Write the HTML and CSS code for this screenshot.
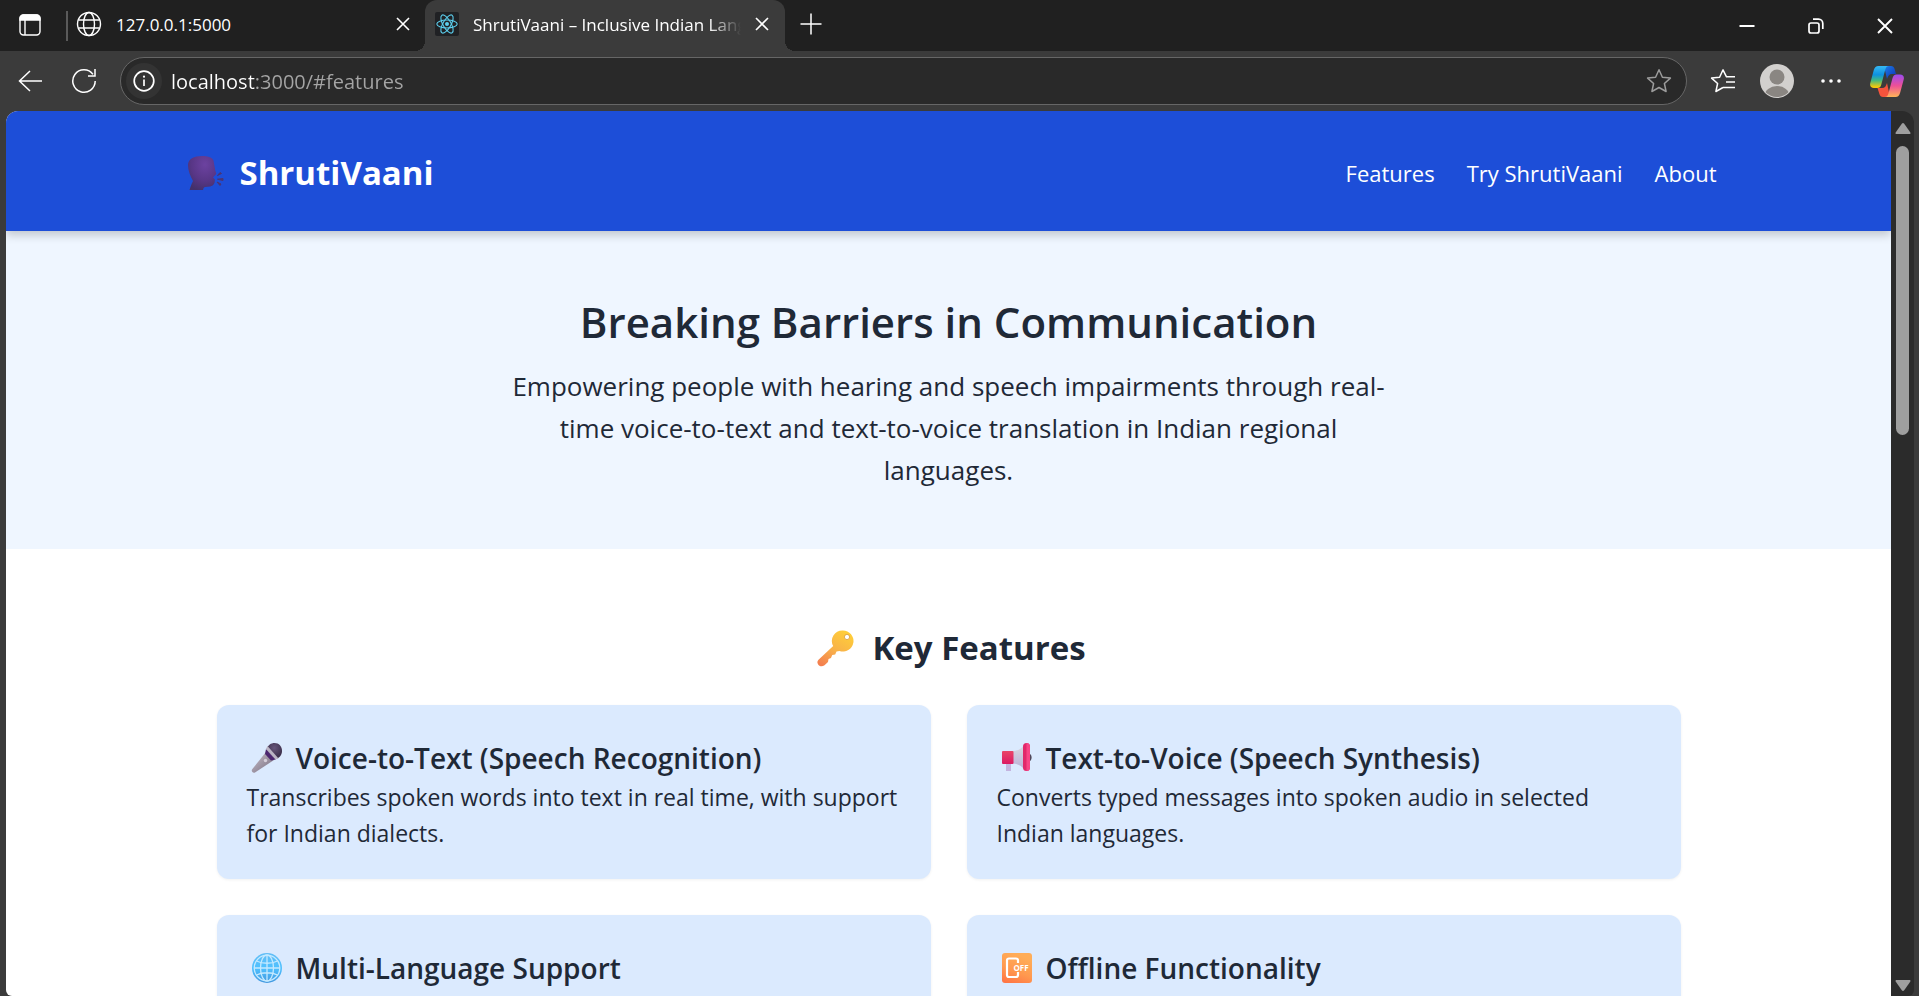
FILE: index.html
```html
<!DOCTYPE html>
<html lang="en">
<head>
<meta charset="utf-8">
<title>ShrutiVaani – Inclusive Indian Languages</title>
<link rel="stylesheet" href="styles.css">
</head>
<body>
<div class="tabstrip">
  <button class="icon-btn workspace" aria-label="Tab actions">
    <svg width="24" height="24" viewBox="0 0 24 24" fill="none" stroke="#fff" stroke-width="1.4"><rect x="2" y="2" width="20" height="20" rx="3.5"/><path d="M2 7V5.500a3.500 3.500 0 0 1 3.500-3.500h13a3.500 3.500 0 0 1 3.500 3.500V7z" fill="#fff"/><path d="M7 7v15"/></svg>
  </button>
  <span class="divider"></span>
  <div class="tab">
    <svg width="26" height="26" viewBox="0 0 26 26" fill="none" stroke="#fff" stroke-width="1.4"><circle cx="13" cy="13" r="11.500"/><ellipse cx="13" cy="13" rx="5.500" ry="11.500"/><path d="M2.500 9h21M2.500 17h21"/></svg>
    <span class="tab-title">127.0.0.1:5000</span>
    <button class="icon-btn" aria-label="Close tab"><svg width="14" height="14" viewBox="0 0 14 14" stroke="#fff" stroke-width="1.6"><path d="M1 1l12 12M13 1L1 13"/></svg></button>
  </div>
  <div class="tab active">
    <svg width="24" height="24" viewBox="0 0 24 24" fill="none" stroke="#5ccfee" stroke-width="1.100"><rect width="24" height="24" rx="2" fill="#202124" stroke="none"/><ellipse cx="12" cy="12" rx="10.200" ry="4"/><ellipse cx="12" cy="12" rx="10.200" ry="4" transform="rotate(60 12 12)"/><ellipse cx="12" cy="12" rx="10.200" ry="4" transform="rotate(120 12 12)"/><circle cx="12" cy="12" r="2" fill="#5ccfee" stroke="none"/></svg>
    <span class="tab-title fade">ShrutiVaani – Inclusive Indian Languages</span>
    <button class="icon-btn" aria-label="Close tab"><svg width="14" height="14" viewBox="0 0 14 14" stroke="#fff" stroke-width="1.6"><path d="M1 1l12 12M13 1L1 13"/></svg></button>
  </div>
  <button class="icon-btn new-tab" aria-label="New tab"><svg width="22" height="22" viewBox="0 0 22 22" stroke="#fff" stroke-width="1.500"><path d="M11 .5v21M.5 11h21"/></svg></button>
  <div class="window-buttons">
    <button class="icon-btn" aria-label="Minimize"><svg width="16" height="16" viewBox="0 0 16 16" stroke="#fff" stroke-width="2"><path d="M.5 8h15"/></svg></button>
    <button class="icon-btn" aria-label="Restore"><svg width="16" height="16" viewBox="0 0 16 16" fill="none" stroke="#fff" stroke-width="1.700"><rect x="1" y="5" width="10" height="10" rx="2"/><path d="M5 1.200h5.500a4.300 4.300 0 0 1 4.300 4.300V11"/></svg></button>
    <button class="icon-btn" aria-label="Close"><svg width="16" height="16" viewBox="0 0 16 16" stroke="#fff" stroke-width="1.900"><path d="M1 1l14 14M15 1L1 15"/></svg></button>
  </div>
</div>

<div class="toolbar">
  <button class="icon-btn" aria-label="Back"><svg width="24" height="22" viewBox="0 0 24 22" fill="none" stroke="#fff" stroke-width="1.500"><path d="M24 11H1M12 1L1.500 11 12 21"/></svg></button>
  <button class="icon-btn" aria-label="Refresh"><svg width="26" height="26" viewBox="0 0 26 26" fill="none" stroke="#fff" stroke-width="1.500"><path d="M24.200 13A11.200 11.200 0 1 1 22 6.400M24 1v7h-7"/></svg></button>
  <div class="address">
    <button class="icon-btn info" aria-label="Site information"><svg width="22" height="22" viewBox="0 0 22 22" fill="none" stroke="#fff" stroke-width="1.700"><circle cx="11" cy="11" r="9.800"/><path d="M11 9.500V16"/><circle cx="11" cy="6.700" r="1.100" fill="#fff" stroke="none"/></svg></button>
    <input class="url" type="text" aria-label="Address" value="localhost:3000/#features">
    <button class="icon-btn" aria-label="Add to favorites"><svg width="26" height="26" viewBox="0 0 26 26" fill="none" stroke="#9b9b9b" stroke-width="1.500" stroke-linejoin="round"><path d="M13 1.800l3.400 7.400 8 .9-6 5.400 1.700 8L13 19.500l-7.100 4 1.700-8-6-5.400 8-.9z"/></svg></button>
  </div>
  <div class="tools">
    <button class="icon-btn" aria-label="Favorites"><svg width="26" height="26" viewBox="0 0 26 26" fill="none" stroke="#fff" stroke-width="1.500" stroke-linejoin="round"><path d="M16.500 8.900L13 1.800l-3.400 7.400-8 .9 6 5.400-1.700 8L13 19.500M16 8.800h9M16 14h9M13 19.500h12"/></svg></button>
    <button class="icon-btn" aria-label="Profile"><svg width="34" height="34" viewBox="0 0 34 34"><clipPath id="av"><circle cx="17" cy="17" r="16"/></clipPath><circle cx="17" cy="17" r="17" fill="#d2d0ce"/><g clip-path="url(#av)" fill="#8a8682"><circle cx="17" cy="13" r="7.500"/><ellipse cx="17" cy="32" rx="12.500" ry="10"/></g></svg></button>
    <button class="icon-btn" aria-label="Settings and more"><svg width="20" height="4" viewBox="0 0 20 4" fill="#fff"><circle cx="2" cy="2" r="1.800"/><circle cx="10" cy="2" r="1.800"/><circle cx="18" cy="2" r="1.800"/></svg></button>
    <button class="icon-btn copilot" aria-label="Copilot"><svg width="34" height="31" viewBox="0 0 34 31">
      <defs><linearGradient id="c1" x1="0" y1="0" x2="0" y2="1"><stop offset="0" stop-color="#36b9f4"/><stop offset=".4" stop-color="#0d91e1"/><stop offset=".65" stop-color="#42b982"/><stop offset=".95" stop-color="#f5c90a"/></linearGradient><linearGradient id="c2" x1="0" y1="0" x2="0" y2="1"><stop offset="0" stop-color="#9b4bf0"/><stop offset=".5" stop-color="#ee5097"/><stop offset="1" stop-color="#ffb557"/></linearGradient><linearGradient id="c3" x1="0" y1="0" x2="1" y2="1"><stop offset="0" stop-color="#1d7fe8"/><stop offset="1" stop-color="#0b2fb5"/></linearGradient></defs>
      <path d="M14 0h7c2 0 3 1 3.600 3L26 8h-4c-3 0-4 2-5 5z" fill="url(#c3)"/>
      <path d="M20 31h-7c-2 0-3-1-3.600-3L7.500 22H12c3 0 4-2 5-5z" fill="#f5533c"/>
      <path d="M8.500 0H19c-2 0-3 1-3.700 3.500l-4 15C10.500 21.300 9.500 22 7.500 22H4c-3 0-4.500-2-3.700-5l3.500-13C4.700 1.500 6 0 8.500 0z" fill="url(#c1)"/>
      <path d="M25.500 31H14.500c2.500 0 3.200-1 3.900-3.500l4-15C23.200 9.700 24.200 8.500 26.500 8.500H30c3 0 4.500 2 3.700 5l-3.500 13c-.9 3-2.200 4.500-4.700 4.500z" fill="url(#c2)"/></svg></button>
  </div>
</div>

<div class="window">
  <div class="page">
    <header class="site-header">
      <div class="container">
        <h1 class="brand">
          <svg width="36" height="34" viewBox="0 0 36 34"><defs><radialGradient id="hd" cx=".6" cy=".25" r=".8"><stop offset="0" stop-color="#6c42a0"/><stop offset=".6" stop-color="#583686"/><stop offset="1" stop-color="#43306a"/></radialGradient></defs><path d="M14 0C19 0 24 1 25.500 4.500L27 13c.2 2 1.300 3.500 1.200 5L25 21.500l1.800 1.700c.4 4.500-1.500 6.500-4.500 7.200l-5 .6c-1.500.3-2 1.300-2.200 3H1.500c1-3 1.700-5.500 3.500-9C2 20 0 14 0 9 0 3 6 0 14 0z" fill="url(#hd)"/><path d="M29.500 19.500l2.500-3 1.500 1zM29.500 23.200l5.500-.7v2zM29 26l3 3.500 1-1.500z" fill="#4a3474" stroke="#4a3474"/></svg>
          <span>ShrutiVaani</span>
        </h1>
        <nav class="nav"><a href="#features">Features</a><a href="#try">Try ShrutiVaani</a><a href="#about">About</a></nav>
      </div>
    </header>
    <section class="hero">
      <h2>Breaking Barriers in Communication</h2>
      <p>Empowering people with hearing and speech impairments through real-time voice-to-text and text-to-voice translation in Indian regional languages.</p>
    </section>
    <section class="features" id="features">
      <h2>
        <svg width="37" height="37" viewBox="0 0 37 37"><defs><linearGradient id="ky" x1=".8" y1="0" x2=".2" y2="1"><stop offset="0" stop-color="#ffcf38"/><stop offset=".55" stop-color="#f8b14a"/><stop offset="1" stop-color="#f4804f"/></linearGradient></defs><path d="M26 .5a10.500 10.500 0 1 1-3.500 20.400l-3 .6-1.300 3-3 .5-1.200 3-2.500 1-.5 3-3.500 3.200c-2 1.600-4.500 1.500-6-.2s-1.500-3.700 0-5.200L16.200 16A10.500 10.500 0 0 1 26 .5z" fill="url(#ky)"/><circle cx="30" cy="7" r="2.600" fill="#fff" stroke="#d99a35" stroke-width=".8"/></svg>
        <span>Key Features</span>
      </h2>
      <div class="grid">
        <article class="card">
          <h3><svg width="32" height="32" viewBox="0 0 32 32"><defs><linearGradient id="mc" x1="0" y1="0" x2="1" y2="1"><stop offset=".25" stop-color="#b5acb8"/><stop offset="1" stop-color="#746a7d"/></linearGradient><radialGradient id="mh" cx=".5" cy=".3" r=".7"><stop offset="0" stop-color="#66557a"/><stop offset="1" stop-color="#342842"/></radialGradient></defs><path d="M15 10l8 8L4 30.500c-2 1-4-1-3-3z" fill="url(#mc)"/><path d="M15.500 7.500C17 3 20 1 23.500 1 28 1 31 4.500 31 9c0 4-2.500 7-7 8.500z" fill="url(#mh)"/><path d="M15 7l9.500 10.500-4.500 1-6-6.500z" fill="#4c2670"/><path d="M16.500 4l11 12.500-3 1L15 7z" fill="#bbb4c4"/><circle cx="14.500" cy="18.500" r="1.700" fill="#d5ced9"/></svg><span>Voice-to-Text (Speech Recognition)</span></h3>
          <p>Transcribes spoken words into text in real time, with support for Indian dialects.</p>
        </article>
        <article class="card">
          <h3><svg width="32" height="32" viewBox="0 0 32 32"><defs><linearGradient id="mg" x1="0" y1="0" x2="0" y2="1"><stop offset="0" stop-color="#d9d9df"/><stop offset="1" stop-color="#bbb0d8"/></linearGradient><linearGradient id="mr" x1="0" y1="0" x2="0" y2="1"><stop offset="0" stop-color="#e94567"/><stop offset="1" stop-color="#db1963"/></linearGradient></defs><path d="M5 20h5v9H5z" fill="#c4b4df"/><path d="M11 9c5 0 9-1.500 12-6v24c-3-4-7-5.500-12-5.500z" fill="url(#mg)"/><rect x="1" y="9" width="11.500" height="13" rx="1" fill="url(#mr)"/><path d="M28 11.500c3.500 1 3.500 7 0 8z" fill="#51485a"/><rect x="22" y="1" width="7" height="28" rx="3.500" fill="#e1286a"/><path d="M25.500 1C28 1 29 3 29 5v20c0 2-1 4-3.500 4z" fill="#f94485"/></svg><span>Text-to-Voice (Speech Synthesis)</span></h3>
          <p>Converts typed messages into spoken audio in selected Indian languages.</p>
        </article>
        <article class="card">
          <h3><svg width="32" height="32" viewBox="0 0 32 32" fill="none" stroke="#c4e9ff" stroke-width="1.300"><defs><linearGradient id="gl" x1="0" y1="0" x2="0" y2="1"><stop offset="0" stop-color="#62bdf5"/><stop offset=".5" stop-color="#4fc1ff"/><stop offset="1" stop-color="#4398df"/></linearGradient></defs><circle cx="16" cy="16" r="15" fill="url(#gl)" stroke="none"/><circle cx="16" cy="16" r="12.800"/><ellipse cx="16" cy="16" rx="6.500" ry="13"/><path d="M16 3v26M3 16h26M5.500 9c6 3 15 3 21 0M5.500 23c6-3 15-3 21 0"/></svg><span>Multi-Language Support</span></h3>
        </article>
        <article class="card">
          <h3><svg width="32" height="32" viewBox="0 0 32 32"><defs><linearGradient id="of" x1="0" y1="1" x2=".4" y2="0"><stop offset="0" stop-color="#ff7043"/><stop offset=".5" stop-color="#ff994f"/><stop offset="1" stop-color="#ffad58"/></linearGradient></defs><rect x="1" y="1" width="30" height="30" rx="3" fill="url(#of)"/><path d="M17 11V8.500a2 2 0 0 0-2-2H8a2 2 0 0 0-2 2V23a2 2 0 0 0 2 2h7a2 2 0 0 0 2-2v-3" fill="none" stroke="#fff" stroke-width="2.200"/><text x="12.500" y="18.500" class="off">OFF</text></svg><span>Offline Functionality</span></h3>
        </article>
      </div>
    </section>
  </div>
  <div class="scrollbar">
    <svg width="16" height="12" viewBox="0 0 16 12" fill="#9f9f9f"><path d="M6.800.8a1.500 1.500 0 0 1 2.400 0l6 8.500c.6 1 .2 1.700-.9 1.700H1.700C.6 11 .2 10.300.8 9.300z"/></svg>
    <div class="track"><div class="thumb"></div></div>
    <svg width="16" height="12" viewBox="0 0 16 12" fill="#9f9f9f"><path d="M6.800 11.200a1.500 1.500 0 0 0 2.400 0l6-8.500c.6-1 .2-1.700-.9-1.700H1.700C.6 1 .2 1.700.8 2.700z"/></svg>
  </div>
</div>
</body>
</html>
```
FILE: styles.css
```css
* { box-sizing: border-box; }

body {
  margin: 0;
  height: 100vh;
  display: flex;
  flex-direction: column;
  overflow: hidden;
  background: #3b3b3b;
  color: #1f2937;
  font-family: "Open Sans", "Noto Sans", sans-serif;
}

h1, h2, h3, p { margin: 0; }
svg { display: block; flex: none; }

.icon-btn {
  display: grid;
  place-items: center;
  flex: none;
  padding: 0;
  border: 0;
  background: none;
}

/* Tab strip */
.tabstrip {
  display: flex;
  align-items: center;
  height: 51px;
  flex: none;
  background: #202020;
  color: #fff;
}
.workspace { width: 60px; padding-bottom: 2px; }
.divider { width: 2px; height: 30px; margin-left: 6px; background: #5a5a5a; }
.tab {
  display: flex;
  align-items: center;
  align-self: stretch;
  width: 357px;
  padding: 0 15px 3px 8px;
  font-size: 17px;
}
.tab-title { flex: 1; margin: 0 14px; overflow: hidden; white-space: nowrap; }
.active {
  position: relative;
  width: 360px;
  padding: 0 16px 3px 10px;
  border-radius: 12px 12px 0 0;
  background: #3b3b3b;
}
.active::before, .active::after {
  content: "";
  position: absolute;
  bottom: 0;
  width: 10px;
  height: 10px;
}
.active::before { right: 100%; background: radial-gradient(circle at 0 0, transparent 10px, #3b3b3b 10px); }
.active::after { left: 100%; background: radial-gradient(circle at 100% 0, transparent 10px, #3b3b3b 10px); }
.fade { mask-image: linear-gradient(90deg, #000 88%, transparent); }
.new-tab { width: 51px; padding-bottom: 4px; }
.window-buttons { display: flex; margin-left: auto; }
.window-buttons .icon-btn { width: 69px; }

/* Toolbar */
.toolbar {
  display: flex;
  align-items: center;
  height: 60px;
  flex: none;
  padding-left: 3px;
}
.toolbar > .icon-btn { width: 54px; }
.address {
  display: flex;
  align-items: center;
  flex: 1;
  height: 48px;
  margin-left: 9px;
  padding: 0 14px 0 5px;
  border: 1px solid #666;
  border-radius: 24px;
  background: #292929;
}
.info { width: 36px; height: 36px; border-radius: 50%; background: #333; }
.url {
  flex: 1;
  min-width: 0;
  padding: 0;
  margin-left: 9px;
  border: 0;
  outline: 0;
  font: 20px "Open Sans", "Noto Sans", sans-serif;
  color: transparent;
  background: linear-gradient(90deg, #fff 84px, #a5a5a5 84px);
  background-clip: text;
}
.tools { display: flex; margin: 0 5px 0 9px; }
.tools .icon-btn { width: 54px; }
.tools .copilot { width: 56px; padding-left: 2px; }

/* Page window */
.window {
  display: flex;
  flex: 1;
  min-height: 0;
  margin: 0 5px 0 6px;
  border-radius: 12px 12px 6px 6px;
  overflow: hidden;
}
.page { flex: 1; overflow: hidden; background: #fff; }
.scrollbar {
  display: flex;
  flex-direction: column;
  align-items: center;
  width: 23px;
  padding: 12px 0 5px;
  background: #2b2b2b;
}
.track { flex: 1; padding-top: 11px; }
.thumb { width: 13px; height: 289px; border-radius: 7px; background: #9f9f9f; }

.site-header {
  position: relative;
  padding: 38px 0 34px;
  background: #1d4ed8;
  color: #fff;
  box-shadow: 0 4px 9px rgba(0, 0, 0, .2);
}
.container {
  display: flex;
  justify-content: space-between;
  align-items: center;
  max-width: 1536px;
  height: 48px;
  margin: 0 auto;
}
.brand { display: flex; align-items: center; gap: 16px; padding-left: 7px; font-size: 33px; line-height: 48px; }
.nav { display: flex; gap: 32px; font-size: 22px; }
.nav a { color: #fff; text-decoration: none; }

.hero { padding: 59px 0 58px; background: #eff6ff; text-align: center; }
.hero h2 { margin-bottom: 11px; font-size: 42px; font-weight: 600; line-height: 64px; }
.hero p { max-width: 880px; margin: 0 auto; font-size: 26px; line-height: 42px; }

.features { max-width: 1536px; margin: 0 auto; padding: 72px 36px; }
.features h2 {
  display: flex;
  align-items: center;
  justify-content: center;
  gap: 18px;
  margin-bottom: 30px;
  padding-left: 6px;
  font-size: 33px;
  line-height: 54px;
}
.grid { display: grid; grid-template-columns: 1fr 1fr; grid-auto-rows: 1fr; gap: 36px; }
.card {
  padding: 32px 30px 28px;
  border-radius: 12px;
  background: #dbeafe;
  box-shadow: 0 1px 3px rgba(0, 0, 0, .06);
}
.card h3 { display: flex; align-items: center; gap: 13px; padding-left: 4px; font-size: 28px; font-weight: 600; line-height: 42px; }
.card p { font-size: 23px; line-height: 36px; }
.off { fill: #fff; font: 700 8px "Open Sans", sans-serif; }
```
